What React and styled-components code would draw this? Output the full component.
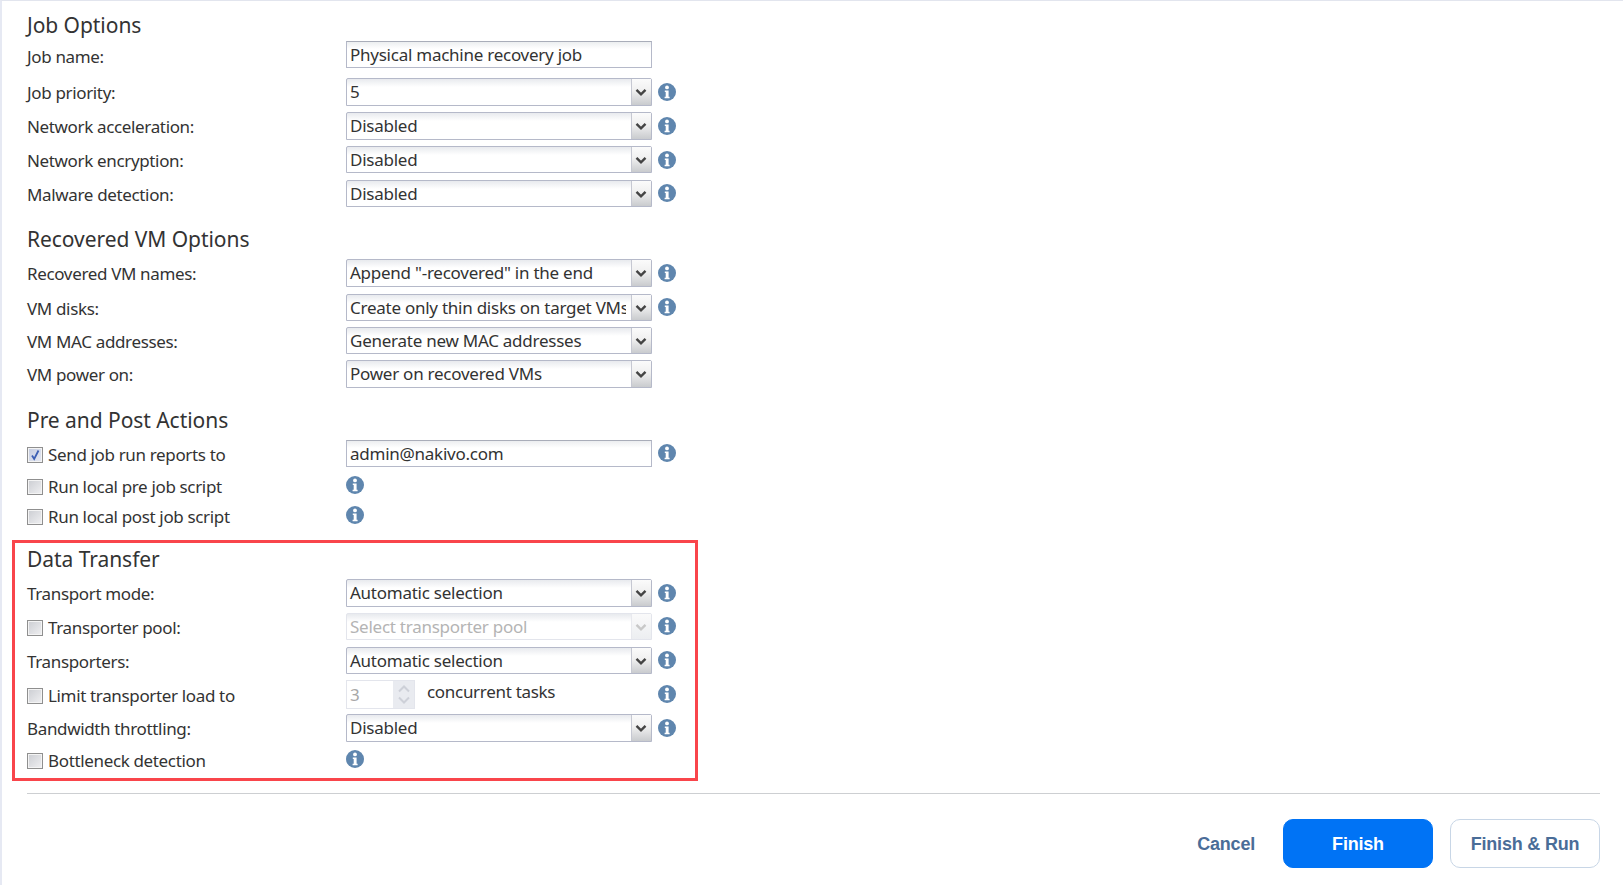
import React from 'react';
import styled, { createGlobalStyle } from 'styled-components';

const GlobalStyle = createGlobalStyle`
  html, body {
    margin: 0;
    background: #fff;
  }
  body {
    font-family: "Noto Sans", "Liberation Sans", sans-serif;
    color: #333;
  }
`;

const Page = styled.div`
  box-sizing: border-box;
  width: 1623px;
  height: 885px;
  overflow: hidden;
  background: #fff;
  border-top: 1px solid #e2e5ee;
  border-left: 2px solid #e6e9f3;
  padding: 10px 23px 0 10px;
`;

const Section = styled.section`
  padding-left: 15px;
`;

const HighlightSection = styled.section`
  box-sizing: border-box;
  width: 686px;
  margin-top: 11px;
  padding: 0 0 5px 12px;
  border: 3px solid #f9454b;
`;

const Heading = styled.h2`
  height: 28px;
  margin: ${(p) => p.$mt || 0}px 0 0;
  font-size: 21px;
  font-weight: 400;
  line-height: 28px;
  letter-spacing: -0.05px;
  color: #333;
`;

const Row = styled.div`
  display: grid;
  grid-template-columns: 319px 306px auto;
  align-items: center;
  height: ${(p) => p.$h || 27}px;
  margin-top: ${(p) => p.$mt || 6}px;
`;

const Label = styled.label`
  display: flex;
  align-items: center;
  gap: 5px;
  padding-top: ${(p) => p.$pt ?? 2}px;
  font-size: 17px;
  line-height: 22px;
  letter-spacing: -0.35px;
  white-space: nowrap;
`;

const Field = styled.div`
  box-sizing: border-box;
  display: flex;
  align-items: center;
  height: 100%;
  min-width: 0;
`;

const TextBox = styled.div`
  box-sizing: border-box;
  width: 306px;
  height: 100%;
  padding: 0 3px;
  border: 1px solid #b5b9c9;
  border-top-color: #a9adb9;
  background: linear-gradient(#eceef0, #fff 7px);
  font-size: 17px;
  line-height: 25px;
  letter-spacing: -0.25px;
  white-space: nowrap;
`;

const SelectBox = styled.div`
  box-sizing: border-box;
  display: flex;
  width: 306px;
  height: 100%;
  border: 1px solid ${(p) => (p.$disabled ? '#e3e5ec' : '#b5b9c9')};
  border-radius: 2px 2px 0 0;
  background: linear-gradient(#e8eaee, #fff 8px);
  font-size: 17px;
  line-height: 25px;
  letter-spacing: -0.25px;
  color: ${(p) => (p.$disabled ? '#b4b4b4' : '#333')};
`;

const SelectValue = styled.span`
  flex: 1;
  min-width: 0;
  margin-right: 5px;
  padding-left: 3px;
  overflow: hidden;
  white-space: nowrap;
`;

const SelectArrow = styled.span`
  display: flex;
  align-items: center;
  justify-content: center;
  flex: 0 0 20px;
  padding-right: 2px;
  box-sizing: border-box;
  border-left: 1px solid ${(p) => (p.$disabled ? '#e8e9ee' : '#c6c8d2')};
  background: ${(p) =>
    p.$disabled
      ? 'linear-gradient(#fafafa, #eceef1)'
      : 'linear-gradient(#fbfbfb, #f0f0f0 45%, #c9cbce)'};
  color: ${(p) => (p.$disabled ? '#c8c8c8' : '#444')};
`;

const InfoMark = styled.svg`
  display: block;
  flex: none;
  width: 18px;
  height: 18px;
  margin-left: ${(p) => p.$ml || 0}px;
  margin-bottom: ${(p) => p.$mb ?? 1}px;
`;

const CheckMark = styled.span`
  box-sizing: border-box;
  display: flex;
  flex: none;
  align-items: center;
  justify-content: center;
  width: 16px;
  height: 16px;
  border: 1px solid #8f8f8f;
  box-shadow: inset 0 0 0 1px #f4f4f4;
  background: ${(p) =>
    p.$checked
      ? 'linear-gradient(135deg, #c3cbe0, #e6e9f2)'
      : 'linear-gradient(135deg, #cbcdd2, #f0f0f2)'};
`;

const SpinBox = styled.div`
  box-sizing: border-box;
  display: flex;
  width: 69px;
  height: 100%;
  border: 1px solid #e3e5ec;
`;

const SpinValue = styled.span`
  flex: 1;
  padding-left: 3px;
  font-size: 17px;
  line-height: 27px;
  color: #a8a8a8;
`;

const SpinArrows = styled.span`
  display: flex;
  flex-direction: column;
  align-items: center;
  justify-content: space-around;
  flex: 0 0 21px;
  padding: 2px 0;
  background: #e9ebf0;
`;

const UnitText = styled.span`
  margin-left: 12px;
  font-size: 17px;
  line-height: 22px;
  letter-spacing: -0.3px;
  padding-bottom: 5px;
`;

const Divider = styled.hr`
  height: 1px;
  margin: 12px 0 0 15px;
  border: 0;
  background: #cdcfd2;
`;

const Footer = styled.footer`
  display: flex;
  justify-content: flex-end;
  align-items: center;
  gap: 17px;
  margin-top: 25px;
`;

const Button = styled.button`
  box-sizing: border-box;
  width: ${(p) => (p.$plain ? 'auto' : '150px')};
  height: 49px;
  margin-right: ${(p) => (p.$plain ? '10px' : 0)};
  padding: 1px 0 0;
  border: 1px solid ${(p) => (p.$primary ? '#0073f5' : p.$plain ? 'transparent' : '#c8d6e6')};
  border-radius: 10px;
  background: ${(p) => (p.$primary ? '#0073f5' : '#fff')};
  font-family: "Liberation Sans", Arial, sans-serif;
  font-size: 18px;
  font-weight: 700;
  letter-spacing: -0.2px;
  color: ${(p) => (p.$primary ? '#fff' : '#4a6d98')};
`;

const Info = ({ ml, mb }) => (
  <InfoMark $ml={ml} $mb={mb} viewBox="0 0 18 18">
    <circle cx="9" cy="9" r="9" fill="#5f86ae" />
    <circle cx="9" cy="4.4" r="1.9" fill="#fff" />
    <path d="M6.8 7.4h3.8v6.4h1v1.5H6.6v-1.5h1.1V8.9h-.9z" fill="#fff" />
  </InfoMark>
);

const Chevron = ({ size = 12 }) => (
  <svg width={size} height={size} viewBox="0 0 12 12">
    <path d="M1.5 3.8l4.5 4.5 4.5-4.5" fill="none" stroke="currentColor" strokeWidth="2.4" />
  </svg>
);

const Select = ({ value, disabled }) => (
  <SelectBox $disabled={disabled}>
    <SelectValue>{value}</SelectValue>
    <SelectArrow $disabled={disabled}>
      <Chevron />
    </SelectArrow>
  </SelectBox>
);

const Check = ({ checked }) => (
  <CheckMark $checked={checked}>
    {checked && (
      <svg width="12" height="12" viewBox="0 0 12 12">
        <path d="M3 6.5l2.2 3.5L9.5 1.5" fill="none" stroke="#3c5fb4" strokeWidth="1.8" />
      </svg>
    )}
  </CheckMark>
);

const SelectRow = ({ label, value, info = true, check, disabled, h, mt, infoMb }) => (
  <Row $h={h} $mt={mt}>
    <Label>
      {check && <Check />}
      {label}
    </Label>
    <Field>
      <Select value={value} disabled={disabled} />
    </Field>
    {info && <Info ml={6} mb={infoMb} />}
  </Row>
);

const ScriptRow = ({ label, mt }) => (
  <Row $mt={mt}>
    <Label>
      <Check />
      {label}
    </Label>
    <Field>
      <Info />
    </Field>
  </Row>
);

export default function App() {
  return (
    <>
      <GlobalStyle />
      <Page>
        <Section>
          <Heading>Job Options</Heading>
          <Row $mt={2}>
            <Label $pt={5}>Job name:</Label>
            <Field>
              <TextBox>Physical machine recovery job</TextBox>
            </Field>
          </Row>
          <SelectRow label="Job priority:" value="5" h={28} mt={10} />
          <SelectRow label="Network acceleration:" value="Disabled" h={28} />
          <SelectRow label="Network encryption:" value="Disabled" infoMb={0} />
          <SelectRow label="Malware detection:" value="Disabled" mt={7} />

          <Heading $mt={18}>Recovered VM Options</Heading>
          <SelectRow label="Recovered VM names:" value={'Append "-recovered" in the end'} h={28} />
          <SelectRow label="VM disks:" value="Create only thin disks on target VMs" mt={7} />
          <SelectRow label="VM MAC addresses:" value="Generate new MAC addresses" info={false} />
          <SelectRow label="VM power on:" value="Power on recovered VMs" info={false} h={28} />

          <Heading $mt={18}>Pre and Post Actions</Heading>
          <Row>
            <Label>
              <Check checked />
              Send job run reports to
            </Label>
            <Field>
              <TextBox>admin@nakivo.com</TextBox>
            </Field>
            <Info ml={6} />
          </Row>
          <ScriptRow label="Run local pre job script" mt={5} />
          <ScriptRow label="Run local post job script" mt={3} />
        </Section>

        <HighlightSection>
          <Heading $mt={2}>Data Transfer</Heading>
          <SelectRow label="Transport mode:" value="Automatic selection" h={28} />
          <SelectRow label="Transporter pool:" value="Select transporter pool" check disabled />
          <SelectRow label="Transporters:" value="Automatic selection" mt={7} />
          <Row $h={28}>
            <Label>
              <Check />
              Limit transporter load to
            </Label>
            <Field>
              <SpinBox>
                <SpinValue>3</SpinValue>
                <SpinArrows>
                  <svg width="14" height="8" viewBox="0 0 14 8">
                    <path d="M2 6.5l5-5 5 5" fill="none" stroke="#cdd0d8" strokeWidth="2" />
                  </svg>
                  <svg width="14" height="8" viewBox="0 0 14 8">
                    <path d="M2 1.5l5 5 5-5" fill="none" stroke="#cdd0d8" strokeWidth="2" />
                  </svg>
                </SpinArrows>
              </SpinBox>
              <UnitText>concurrent tasks</UnitText>
            </Field>
            <Info ml={6} mb={2} />
          </Row>
          <SelectRow label="Bandwidth throttling:" value="Disabled" h={28} />
          <ScriptRow label="Bottleneck detection" mt={4} />
        </HighlightSection>

        <Divider />
        <Footer>
          <Button $plain>Cancel</Button>
          <Button $primary>Finish</Button>
          <Button>Finish &amp; Run</Button>
        </Footer>
      </Page>
    </>
  );
}
